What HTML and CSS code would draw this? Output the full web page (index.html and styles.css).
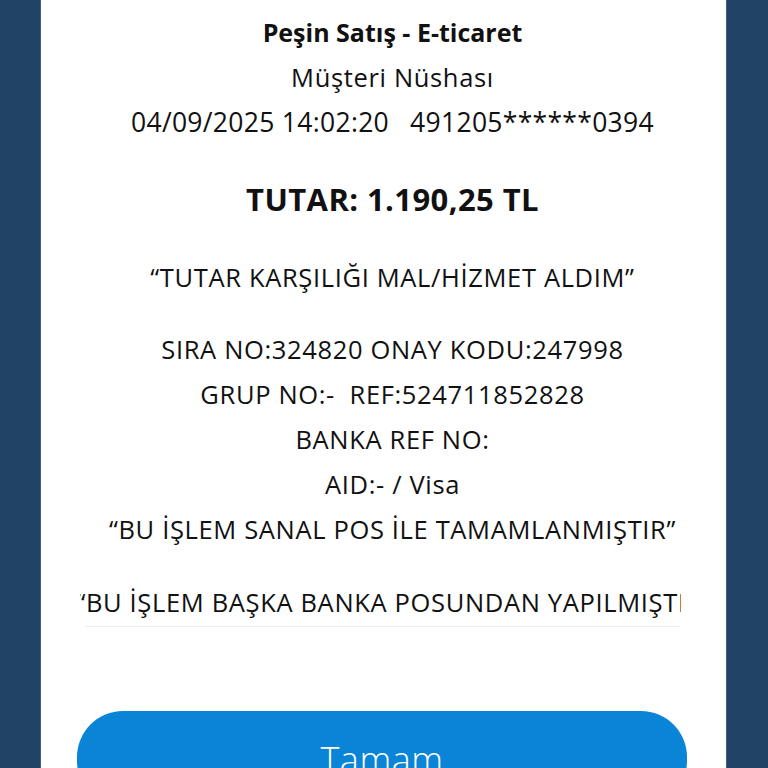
FILE: index.html
```html
<!DOCTYPE html>
<html lang="tr">
<head>
<meta charset="utf-8">
<link rel="stylesheet" href="styles.css">
</head>
<body>
<div class="frame">
  <div class="side side-left"></div>
  <main class="card">
    <section class="header shifted">
      <div class="title">Peşin Satış - E-ticaret</div>
      <div class="line">Müşteri Nüshası</div>
      <div class="line date-line"><span>04/09/2025 14:02:20</span><span>491205******0394</span></div>
    </section>
    <div class="amount shifted">TUTAR: 1.190,25 TL</div>
    <div class="line quote shifted">“TUTAR KARŞILIĞI MAL/HİZMET ALDIM”</div>
    <section class="details shifted">
      <div class="line">SIRA NO:324820 ONAY KODU:247998</div>
      <div class="line">GRUP NO:-&nbsp;&nbsp;REF:524711852828</div>
      <div class="line">BANKA REF NO:</div>
      <div class="line">AID:- / Visa</div>
      <div class="line">“BU İŞLEM SANAL POS İLE TAMAMLANMIŞTIR”</div>
    </section>
    <div class="clip-field"><span>“BU İŞLEM BAŞKA BANKA POSUNDAN YAPILMIŞTIR”</span></div>
    <button class="ok-btn">Tamam</button>
  </main>
  <div class="side side-right"></div>
</div>
</body>
</html>
```
FILE: styles.css
```css
html, body {
  margin: 0;
  padding: 0;
  height: 100%;
  overflow: hidden;
  background: #214366;
}
.frame {
  display: grid;
  grid-template-columns: 41px 1fr 42px;
  height: 768px;
}
.side-left {
  background: #214366;
  border-right: 1px solid #3d5f80;
}
.side-right {
  background: #214366;
  border-left: 1px solid #3d5f80;
}
.card {
  background: #ffffff;
  display: flex;
  flex-direction: column;
  align-items: center;
  overflow: hidden;
  font-family: "Open Sans", "Noto Sans", sans-serif;
  color: #111111;
  font-size: 25.5px;
  letter-spacing: 0.65px;
  line-height: 45px;
  text-align: center;
}
.card > * {
  flex: none;
}
.shifted {
  padding-left: 18px;
}
.header {
  padding-top: 10px;
  display: flex;
  flex-direction: column;
  align-items: center;
}
.title {
  font-weight: 700;
  font-size: 25px;
  letter-spacing: 0;
}
.line {
  white-space: nowrap;
}
.date-line {
  display: flex;
  gap: 21px;
  font-size: 26.5px;
  letter-spacing: 0.3px;
}
.amount {
  margin-top: 32px;
  font-size: 31px;
  font-weight: 700;
  letter-spacing: 0.4px;
}
.quote {
  margin-top: 33px;
}
.details {
  margin-top: 27px;
  display: flex;
  flex-direction: column;
  align-items: center;
}
.clip-field {
  box-sizing: border-box;
  margin-top: 28px;
  margin-left: -6px;
  width: 601px;
  height: 47px;
  padding-left: 27px;
  padding-bottom: 1px;
  background: linear-gradient(#ececec, #ececec) no-repeat 5px 100% / calc(100% - 6px) 1px;
  display: flex;
  justify-content: center;
  overflow: hidden;
  white-space: nowrap;
}
.clip-field span {
  flex: none;
}
.ok-btn {
  margin-top: 84px;
  width: 610px;
  height: 96px;
  margin-left: -3px;
  border: none;
  border-radius: 46px;
  background: #0a84d6;
  color: #ffffff;
  font-family: "Open Sans", "Noto Sans", sans-serif;
  font-weight: 300;
  font-size: 36px;
  letter-spacing: 0.5px;
  padding: 0;
}
```
